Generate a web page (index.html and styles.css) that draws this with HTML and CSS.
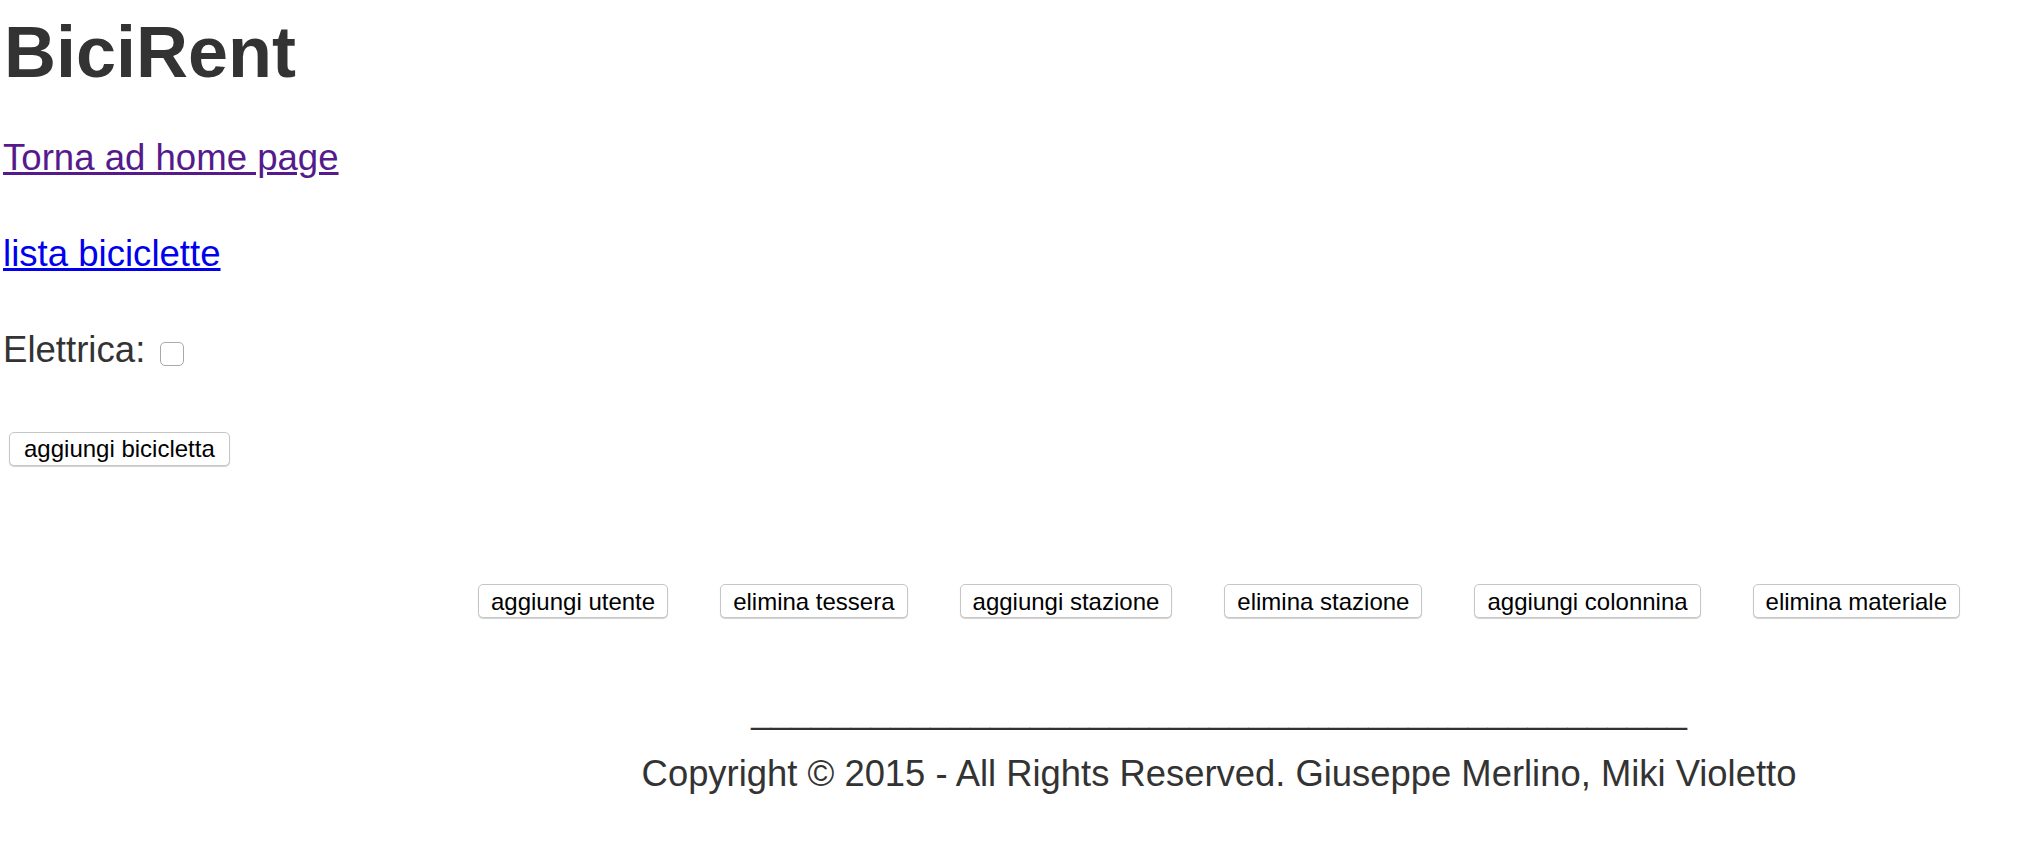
FILE: index.html
```html
<!DOCTYPE html>
<html lang="it">
<head>
<meta charset="utf-8">
<title>BiciRent</title>
<link rel="stylesheet" href="styles.css">
</head>
<body>
<div class="page">
  <h1 class="title">BiciRent</h1>
  <p class="line"><a class="link visited" href="#home">Torna ad home page</a></p>
  <p class="line"><a class="link" href="#lista">lista biciclette</a></p>
  <form class="add-form">
    <p class="line label-line"><label for="elettrica">Elettrica:</label> <input class="check" type="checkbox" id="elettrica"></p>
    <button class="btn btn-add" type="button">aggiungi bicicletta</button>
  </form>
  <div class="actions">
    <button class="btn" type="button">aggiungi utente</button>
    <button class="btn" type="button">elimina tessera</button>
    <button class="btn" type="button">aggiungi stazione</button>
    <button class="btn" type="button">elimina stazione</button>
    <button class="btn" type="button">aggiungi colonnina</button>
    <button class="btn" type="button">elimina materiale</button>
  </div>
  <footer class="footer">
    <p class="rule">_______________________________________________</p>
    <p class="copy">Copyright © 2015 - All Rights Reserved. Giuseppe Merlino, Miki Violetto</p>
  </footer>
</div>
</body>
</html>
```
FILE: styles.css
```css
html, body {
  margin: 0;
  padding: 0;
  background: #ffffff;
}

body {
  font-family: "Liberation Sans", Helvetica, Arial, sans-serif;
  color: #333333;
  font-size: 36px;
}

.page {
  padding: 12px 0 0 3px;
  width: 2027px;
}

.title {
  margin: 0 0 0 1px;
  font-size: 72px;
  line-height: 80px;
  font-weight: bold;
  color: #333333;
}

.line {
  margin: 0 0 56px;
  font-size: 36.6px;
  line-height: 40px;
  height: 40px;
}

.title + .line {
  margin-top: 46px;
}

.link {
  color: #0000ee;
  text-decoration: underline;
}

.link.visited {
  color: #551a8b;
}

.add-form {
  margin: 0;
}

.label-line {
  margin-bottom: 54px;
}

.check {
  -webkit-appearance: none;
  appearance: none;
  width: 24px;
  height: 24px;
  margin: 0 0 0 5px;
  border: 1px solid #a9a9a9;
  border-radius: 5px;
  background: #ffffff;
  vertical-align: -4px;
  box-sizing: border-box;
}

.btn {
  font-family: "Liberation Sans", Helvetica, Arial, sans-serif;
  font-size: 24px;
  color: #000000;
  background: #ffffff;
  border: 1px solid #c6c6c6;
  border-radius: 5px;
  box-shadow: 0 1px 1px rgba(0, 0, 0, 0.18);
  height: 34px;
  line-height: 31px;
  padding: 0 12px;
  margin: 0;
  box-sizing: border-box;
}

.btn-add {
  margin-left: 6px;
  padding: 0 14px;
}

.actions {
  margin: 118px 0 0 405px;
  display: flex;
  justify-content: center;
  gap: 52px;
}

.footer {
  margin-left: 405px;
  text-align: center;
  padding-top: 73px;
}

.rule {
  margin: 0;
  font-size: 35.8px;
  line-height: 40px;
  color: #333333;
}

.copy {
  margin: 23px 0 0;
  font-size: 36.4px;
  line-height: 40px;
  color: #333333;
}
```
